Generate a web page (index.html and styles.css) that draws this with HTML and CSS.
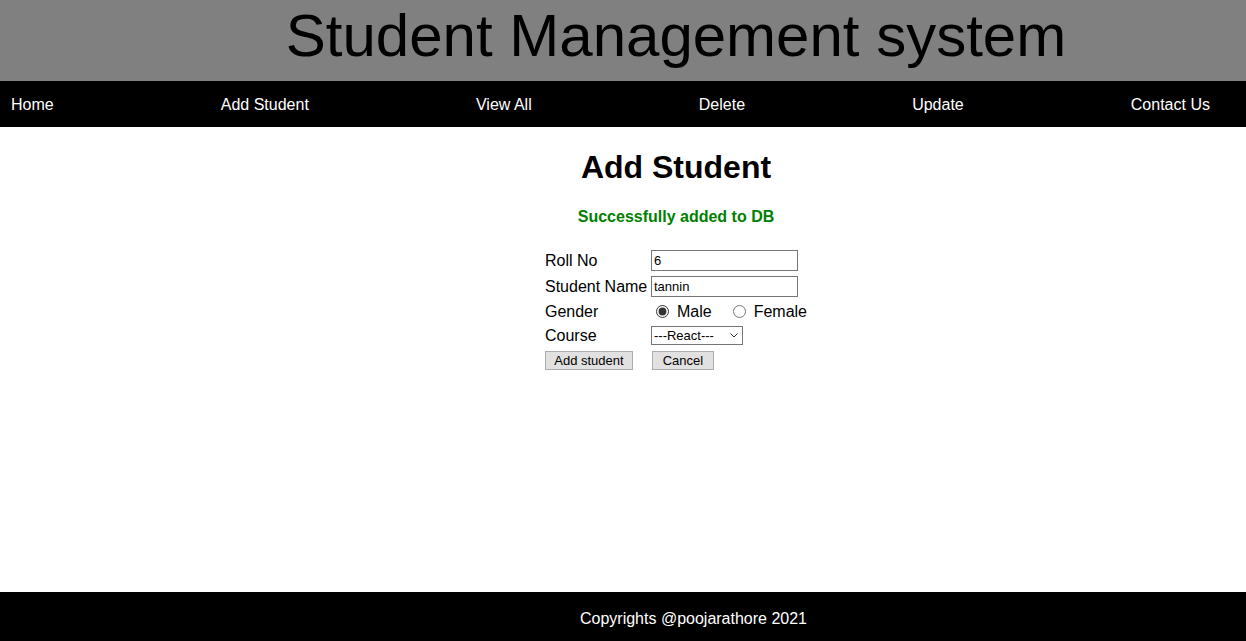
FILE: index.html
```html
<!DOCTYPE html>
<html>
<head>
<meta charset="utf-8">
<title>Student Management system</title>
<link rel="stylesheet" href="styles.css">
</head>
<body>
<div class="page">
  <header class="site-header">
    <h1 class="site-title">Student Management system</h1>
  </header>
  <nav class="nav">
    <a href="#">Home</a>
    <a href="#">Add Student</a>
    <a href="#">View All</a>
    <a href="#">Delete</a>
    <a href="#">Update</a>
    <a href="#">Contact Us</a>
  </nav>
  <main class="main">
    <h2 class="heading">Add Student</h2>
    <p class="msg">Successfully added to DB</p>
    <form class="form">
      <label class="lbl">Roll No</label>
      <div class="field"><input class="txt" type="text" value="6"></div>
      <label class="lbl">Student Name</label>
      <div class="field"><input class="txt" type="text" value="tannin"></div>
      <label class="lbl">Gender</label>
      <div class="field radios">
        <label class="opt"><input class="rad" type="radio" name="g" checked>Male</label>
        <label class="opt"><input class="rad" type="radio" name="g">Female</label>
      </div>
      <label class="lbl">Course</label>
      <div class="field">
        <div class="sel-wrap">
          <select class="sel"><option>---React---</option></select>
          <svg class="chev" width="8" height="5" viewBox="0 0 8 5"><path d="M0.5 0.5 L4 4 L7.5 0.5" fill="none" stroke="#333" stroke-width="1"/></svg>
        </div>
      </div>
      <div class="field"><button type="button" class="btn btn-add">Add student</button></div>
      <div class="field"><button type="button" class="btn btn-cancel">Cancel</button></div>
    </form>
  </main>
  <footer class="footer">
    <span class="copy">Copyrights @poojarathore 2021</span>
  </footer>
</div>
</body>
</html>
```

FILE: styles.css
```css
html, body {
  margin: 0;
  padding: 0;
  height: 100%;
}
body {
  font-family: "Liberation Sans", Arial, sans-serif;
  font-size: 16px;
  color: #000;
  background: #fff;
}
.page {
  display: flex;
  flex-direction: column;
  min-height: 100vh;
}
.site-header {
  box-sizing: border-box;
  background: #808080;
  height: 81px;
  display: flex;
  align-items: center;
  justify-content: center;
  padding-left: 106px;
  padding-bottom: 10px;
}
.site-title {
  margin: 0;
  font-weight: normal;
  font-size: 60px;
  line-height: 1;
  color: #000;
}
.nav {
  box-sizing: border-box;
  background: #000;
  height: 46px;
  display: flex;
  align-items: center;
  justify-content: space-between;
  padding: 2px 36px 0 11px;
}
.nav a {
  color: #fff;
  text-decoration: none;
  font-size: 16px;
}
.main {
  flex: 1;
  display: flex;
  flex-direction: column;
  align-items: center;
  padding-left: 106px;
}
.heading {
  margin: 22px 0 0;
  font-size: 32px;
  font-weight: bold;
  line-height: 37px;
}
.msg {
  margin: 22px 0 0;
  color: #008000;
  font-weight: bold;
  font-size: 16px;
  line-height: 18px;
}
.form {
  margin-top: 24px;
  margin-left: 0;
  display: grid;
  grid-template-columns: 106px auto;
  row-gap: 5px;
  align-items: center;
}
.lbl {
  font-size: 16px;
  line-height: 19px;
}
.field {
  display: flex;
  align-items: center;
}
.txt {
  box-sizing: border-box;
  width: 147px;
  height: 21px;
  border: 1px solid #767676;
  padding: 1px 2px;
  font-family: "Liberation Sans", Arial, sans-serif;
  font-size: 13px;
  margin: 0;
}
.radios {
  font-size: 16px;
  gap: 16px;
}
.opt {
  display: flex;
  align-items: center;
}
.rad {
  margin: 0 8px 0 5px;
  width: 13px;
  height: 13px;
  accent-color: #333;
}
.sel-wrap {
  position: relative;
  display: flex;
}
.sel {
  box-sizing: border-box;
  width: 92px;
  height: 19px;
  border: 1px solid #767676;
  border-radius: 0;
  font-family: "Liberation Sans", Arial, sans-serif;
  font-size: 13px;
  padding: 0 2px;
  background: #fff;
  color: #000;
  margin: 0;
  appearance: none;
  -webkit-appearance: none;
}
.chev {
  position: absolute;
  right: 5px;
  top: 7px;
  pointer-events: none;
}
.btn {
  box-sizing: border-box;
  height: 19px;
  border: 1px solid #adadad;
  background: #e1e1e1;
  font-family: "Liberation Sans", Arial, sans-serif;
  font-size: 13px;
  padding: 0;
  margin: 1px 0 0;
  color: #000;
}
.btn-add {
  width: 88px;
}
.btn-cancel {
  width: 62px;
  margin-left: 1px;
}
.footer {
  box-sizing: border-box;
  background: #000;
  height: 49px;
  display: flex;
  align-items: center;
  justify-content: center;
  padding-left: 141px;
  padding-top: 5px;
}
.copy {
  color: #fff;
  font-size: 16px;
}
```
